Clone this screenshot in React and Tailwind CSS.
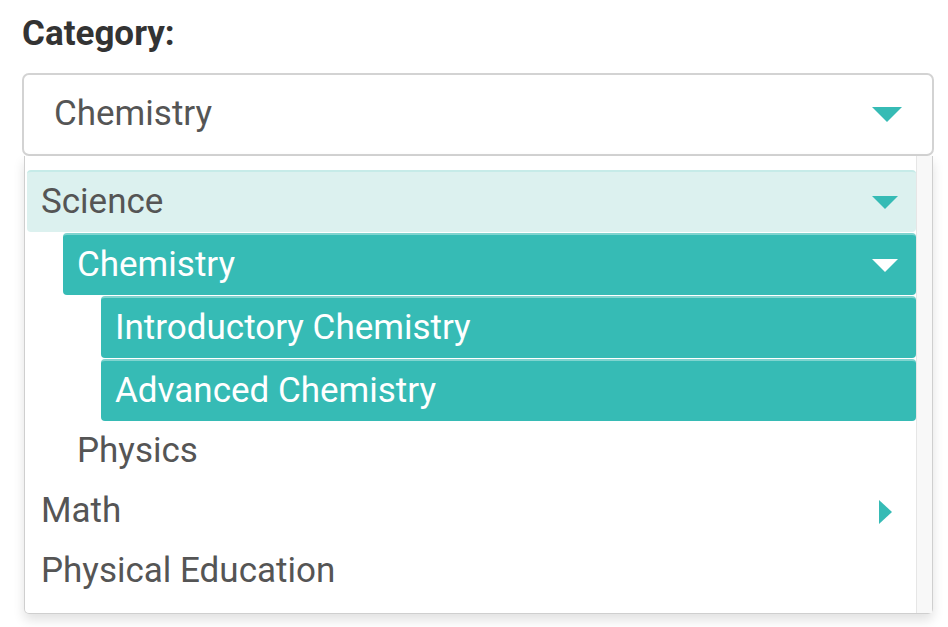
const rows = [
  { label: "Science", level: 0, kind: "light", arrow: "down" },
  { label: "Chemistry", level: 1, kind: "active", arrow: "down" },
  { label: "Introductory Chemistry", level: 2, kind: "active" },
  { label: "Advanced Chemistry", level: 2, kind: "active" },
  { label: "Physics", level: 1 },
  { label: "Math", level: 0, arrow: "right" },
  { label: "Physical Education", level: 0 },
];

const indent = ["ml-0", "ml-[36px]", "ml-[74px]"];

function Down({ color }) {
  return (
    <svg width="26" height="13" viewBox="0 0 26 13">
      <path d="M0 0 L26 0 L13 13 Z" fill={color} />
    </svg>
  );
}

function Right() {
  return (
    <svg width="13" height="24" viewBox="0 0 13 24">
      <path d="M0 0 L13 12 L0 24 Z" fill="#36bbb5" />
    </svg>
  );
}

function Row({ row }) {
  let cls = "h-[59px] text-[#555]";
  if (row.kind === "light") cls = "h-[62px] bg-[#dcf1ef] border-t-2 border-[#c6ebe8] text-[#555]";
  if (row.kind === "active") cls = "h-[62px] bg-[#36bbb5] border-t-2 border-[#7fd4cf] text-white";
  return (
    <div
      className={`${indent[row.level]} mb-px rounded-[4px] flex items-center justify-between pl-[14px] pr-[18px] ${cls}`}
    >
      <span>{row.label}</span>
      {row.arrow === "down" && <Down color={row.kind === "active" ? "#fff" : "#36bbb5"} />}
      {row.arrow === "right" && (
        <span className="mr-[6px]">
          <Right />
        </span>
      )}
    </div>
  );
}

export default function App() {
  return (
    <div
      className="w-[948px] h-[627px] bg-white overflow-hidden px-[22px] pt-[12px]"
      style={{ fontFamily: "Roboto, 'Liberation Sans', sans-serif" }}
    >
      <div className="text-[35px] font-bold text-[#333] leading-[44px]">Category:</div>
      <div className="mt-[17px] w-[912px] h-[83px] border-2 border-[#d3d3d3] rounded-[7px] flex items-center justify-between pl-[30px] pr-[30px] text-[35px] text-[#555]">
        <span>Chemistry</span>
        <svg width="30" height="15" viewBox="0 0 30 15">
          <path d="M0 0 L30 0 L15 15 Z" fill="#36bbb5" />
        </svg>
      </div>
      <div className="ml-[2px] w-[909px] h-[458px] border border-t-0 border-[#cfcfcf] rounded-b-[5px] shadow-[0_6px_12px_rgba(0,0,0,0.12)] flex">
        <div className="flex-1 pt-[14px] pl-[2px] text-[35px]">
          {rows.map((r) => (
            <Row key={r.label} row={r} />
          ))}
        </div>
        <div className="w-[16px] bg-[#f8f8f8] border-l border-[#e6e6e6]" />
      </div>
    </div>
  );
}
